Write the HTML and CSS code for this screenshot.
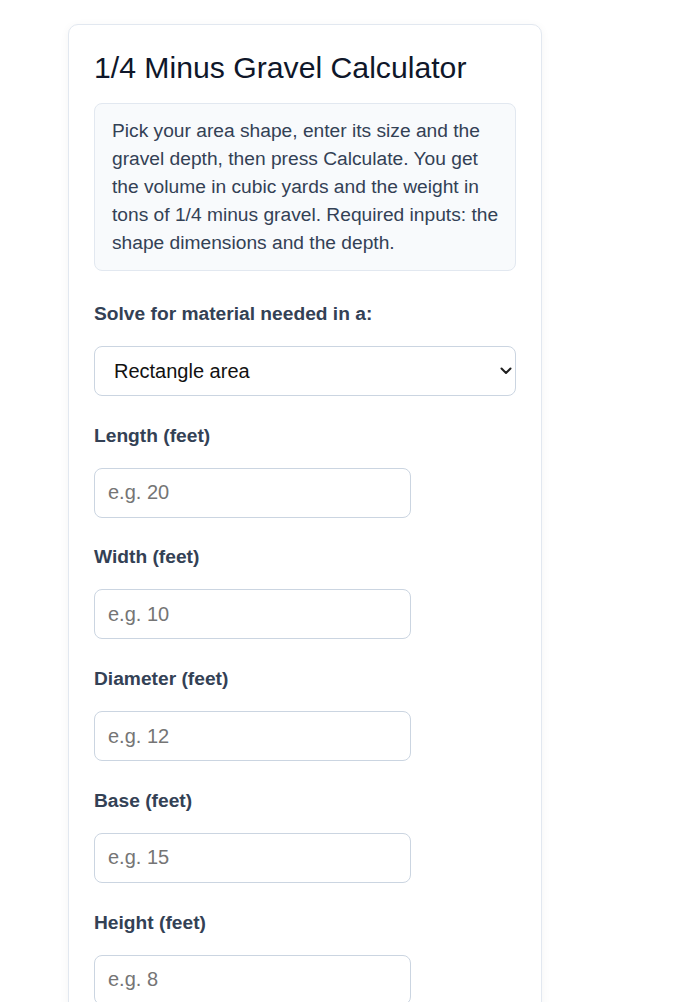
FILE: index.html
```html
<!DOCTYPE html>
<html lang="en">
<head>
	<meta charset="UTF-8">
	<title>1/4 Minus Gravel Calculator</title>
	<link rel="stylesheet" href="styles.css">
</head>
<body>
	<div class="page">
		<div class="card">
			<h1 class="title">1/4 Minus Gravel Calculator</h1>
			<p class="intro">Pick your area shape, enter its size and the gravel depth, then press Calculate. You get the volume in cubic yards and the weight in tons of 1/4 minus gravel. Required inputs: the shape dimensions and the depth.</p>

			<div class="field">
				<label class="label" for="shape">Solve for material needed in a:</label>
				<div class="select-wrap">
					<select id="shape" class="select">
						<option>Rectangle area</option>
						<option>Circle area</option>
						<option>Triangle area</option>
					</select>
					<svg class="chevron" width="12" height="8" viewBox="0 0 12 8"><polyline points="1.5,1.5 6,6 10.5,1.5" fill="none" stroke="#1f1f1f" stroke-width="2" stroke-linecap="round" stroke-linejoin="round"/></svg>
				</div>
			</div>

			<div class="field">
				<label class="label" for="length">Length (feet)</label>
				<input id="length" class="input" type="text" placeholder="e.g. 20">
			</div>
			<div class="field">
				<label class="label" for="width">Width (feet)</label>
				<input id="width" class="input" type="text" placeholder="e.g. 10">
			</div>
			<div class="field">
				<label class="label" for="diameter">Diameter (feet)</label>
				<input id="diameter" class="input" type="text" placeholder="e.g. 12">
			</div>
			<div class="field">
				<label class="label" for="base">Base (feet)</label>
				<input id="base" class="input" type="text" placeholder="e.g. 15">
			</div>
			<div class="field">
				<label class="label" for="height">Height (feet)</label>
				<input id="height" class="input" type="text" placeholder="e.g. 8">
			</div>
			<div class="field">
				<label class="label" for="depth">Depth (inches)</label>
				<input id="depth" class="input" type="text" placeholder="e.g. 3">
			</div>
			<button class="btn" type="button">Calculate</button>
		</div>
	</div>
</body>
</html>
```

FILE: styles.css
```css
*{
	margin:0px;
	padding:0px;
	box-sizing:border-box;
}
body{
	background:#ffffff;
	font-family:"Liberation Sans", Arial, sans-serif;
}
.page{
	padding:24px 0px 40px 68px;
}
.card{
	width:474px;
	padding:25px;
	background:#ffffff;
	border:1px solid #e2e8f0;
	border-radius:10px;
	box-shadow:0px 2px 10px rgba(15,23,42,0.05);
}
.title{
	font-size:30.2px;
	line-height:36px;
	font-weight:400;
	color:#0f172a;
	margin-bottom:17px;
}
.intro{
	font-size:19.2px;
	line-height:28px;
	color:#334155;
	background:#f8fafc;
	border:1px solid #e2e8f0;
	border-radius:8px;
	padding:13px 14px 13px 17px;
	margin-bottom:28.75px;
}
.field{
	margin-bottom:25.75px;
}
.label{
	display:block;
	font-size:19.2px;
	line-height:28px;
	font-weight:700;
	color:#334155;
	margin-bottom:18px;
}
.select-wrap{
	position:relative;
}
.select{
	display:block;
	width:100%;
	height:50px;
	padding:0px 40px 0px 19px;
	font-family:"Liberation Sans", Arial, sans-serif;
	font-size:20px;
	color:#111111;
	background:#ffffff;
	border:1px solid #cbd5e1;
	border-radius:8px;
	-webkit-appearance:none;
	appearance:none;
}
.chevron{
	position:absolute;
	right:4px;
	top:21px;
	pointer-events:none;
}
.input{
	display:block;
	width:75%;
	height:50px;
	padding:0px 13px;
	font-family:"Liberation Sans", Arial, sans-serif;
	font-size:20px;
	color:#111111;
	background:#ffffff;
	border:1px solid #cbd5e1;
	border-radius:8px;
	outline:none;
}
.input::placeholder{
	color:#757575;
}
.btn{
	padding:12px 24px;
	font-family:"Liberation Sans", Arial, sans-serif;
	font-size:19px;
	color:#ffffff;
	background:#2563eb;
	border:none;
	border-radius:8px;
}
```
